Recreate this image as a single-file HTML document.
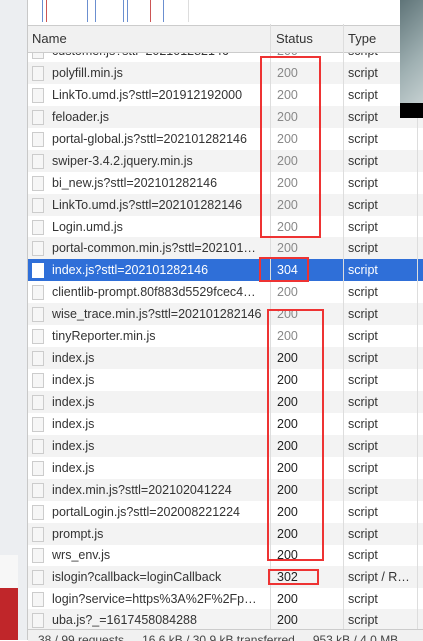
<!DOCTYPE html>
<html><head><style>
body{margin:0;width:423px;height:640px;overflow:hidden;background:#fff;font-family:"Liberation Sans",sans-serif;position:relative}
.a{position:absolute}
.row{position:absolute;left:28px;width:395px;height:22px;font-size:12.5px;line-height:22px;color:#333}
.row .n{position:absolute;left:24px;width:238px;white-space:nowrap;overflow:hidden}
.row .s{position:absolute;left:249px;color:#888}
.row .t{position:absolute;left:320px}
.row .i{position:absolute;left:4px;top:4px;width:10px;height:13px;border:1px solid #ccc;background:#f6f6f6}
.row.b .s{color:#222}
.alt{background:#f3f3f3}
.sel{background:#2f6fd8;color:#fff}
.sel .s,.sel .n,.sel .t{color:#fff}
.sel .i{background:#fff;border-color:#fff}
.box{position:absolute;border:2.5px solid #ee3333}
</style></head><body>
<div class="a" style="left:0;top:0;width:27px;height:640px;background:#eceef1"></div>
<div class="a" style="left:0;top:555px;width:18px;height:33px;background:#f7f7f7"></div>
<div class="a" style="left:0;top:588px;width:18px;height:52px;background:#c0262a"></div>
<div class="a" style="left:27px;top:0;width:1px;height:640px;background:#c8c8c8"></div>
<div class="a" style="left:28px;top:0;width:395px;height:24px;background:#fff"></div>
<div class="a" style="left:42px;top:0;width:1px;height:22px;background:#6b8fd0"></div>
<div class="a" style="left:46px;top:0;width:1px;height:22px;background:#c55"></div>
<div class="a" style="left:87px;top:0;width:1px;height:22px;background:#6b8fd0"></div>
<div class="a" style="left:95px;top:0;width:1px;height:22px;background:#6b8fd0"></div>
<div class="a" style="left:123px;top:0;width:1px;height:22px;background:#6b8fd0"></div>
<div class="a" style="left:127px;top:0;width:1px;height:22px;background:#6b8fd0"></div>
<div class="a" style="left:150px;top:0;width:1px;height:22px;background:#c55"></div>
<div class="a" style="left:163px;top:0;width:1px;height:22px;background:#6b8fd0"></div>
<div class="a" style="left:188px;top:0;width:1px;height:22px;background:#ddd"></div>

<div class="row" style="top:40px"><div class="i"></div><div class="n">customer.js?sttl=202101282146</div><div class="s">200</div><div class="t">script</div></div>
<div class="a" style="left:28px;top:25px;width:395px;height:26px;background:#f1f1f1;border-top:1px solid #ccc;border-bottom:1px solid #ccc"></div>
<div class="a" style="left:32px;top:31px;font-size:13px;color:#333">Name</div>
<div class="a" style="left:276px;top:31px;font-size:13px;color:#333">Status</div>
<div class="a" style="left:348px;top:31px;font-size:13px;color:#333">Type</div>

<div class="row alt" style="top:62px"><div class="i"></div><div class="n">polyfill.min.js</div><div class="s">200</div><div class="t">script</div></div>
<div class="row" style="top:84px"><div class="i"></div><div class="n">LinkTo.umd.js?sttl=201912192000</div><div class="s">200</div><div class="t">script</div></div>
<div class="row alt" style="top:106px"><div class="i"></div><div class="n">feloader.js</div><div class="s">200</div><div class="t">script</div></div>
<div class="row" style="top:128px"><div class="i"></div><div class="n">portal-global.js?sttl=202101282146</div><div class="s">200</div><div class="t">script</div></div>
<div class="row alt" style="top:150px"><div class="i"></div><div class="n">swiper-3.4.2.jquery.min.js</div><div class="s">200</div><div class="t">script</div></div>
<div class="row" style="top:172px"><div class="i"></div><div class="n">bi_new.js?sttl=202101282146</div><div class="s">200</div><div class="t">script</div></div>
<div class="row alt" style="top:194px"><div class="i"></div><div class="n">LinkTo.umd.js?sttl=202101282146</div><div class="s">200</div><div class="t">script</div></div>
<div class="row" style="top:216px"><div class="i"></div><div class="n">Login.umd.js</div><div class="s">200</div><div class="t">script</div></div>
<div class="row alt" style="top:237px"><div class="i"></div><div class="n">portal-common.min.js?sttl=202101…</div><div class="s">200</div><div class="t">script</div></div>
<div class="row sel" style="top:259px"><div class="i"></div><div class="n">index.js?sttl=202101282146</div><div class="s">304</div><div class="t">script</div></div>
<div class="row" style="top:281px"><div class="i"></div><div class="n">clientlib-prompt.80f883d5529fcec4…</div><div class="s">200</div><div class="t">script</div></div>
<div class="row alt" style="top:303px"><div class="i"></div><div class="n">wise_trace.min.js?sttl=202101282146</div><div class="s">200</div><div class="t">script</div></div>
<div class="row" style="top:325px"><div class="i"></div><div class="n">tinyReporter.min.js</div><div class="s">200</div><div class="t">script</div></div>
<div class="row alt b" style="top:347px"><div class="i"></div><div class="n">index.js</div><div class="s">200</div><div class="t">script</div></div>
<div class="row b" style="top:369px"><div class="i"></div><div class="n">index.js</div><div class="s">200</div><div class="t">script</div></div>
<div class="row alt b" style="top:391px"><div class="i"></div><div class="n">index.js</div><div class="s">200</div><div class="t">script</div></div>
<div class="row b" style="top:413px"><div class="i"></div><div class="n">index.js</div><div class="s">200</div><div class="t">script</div></div>
<div class="row alt b" style="top:435px"><div class="i"></div><div class="n">index.js</div><div class="s">200</div><div class="t">script</div></div>
<div class="row b" style="top:457px"><div class="i"></div><div class="n">index.js</div><div class="s">200</div><div class="t">script</div></div>
<div class="row alt b" style="top:479px"><div class="i"></div><div class="n">index.min.js?sttl=202102041224</div><div class="s">200</div><div class="t">script</div></div>
<div class="row b" style="top:501px"><div class="i"></div><div class="n">portalLogin.js?sttl=202008221224</div><div class="s">200</div><div class="t">script</div></div>
<div class="row alt b" style="top:523px"><div class="i"></div><div class="n">prompt.js</div><div class="s">200</div><div class="t">script</div></div>
<div class="row b" style="top:544px"><div class="i"></div><div class="n">wrs_env.js</div><div class="s">200</div><div class="t">script</div></div>
<div class="row alt b" style="top:566px"><div class="i"></div><div class="n">islogin?callback=loginCallback</div><div class="s">302</div><div class="t">script / R…</div></div>
<div class="row b" style="top:588px"><div class="i"></div><div class="n">login?service=https%3A%2F%2Fp…</div><div class="s">200</div><div class="t">script</div></div>
<div class="row alt b" style="top:609px"><div class="i"></div><div class="n">uba.js?_=1617458084288</div><div class="s">200</div><div class="t">script</div></div>
<div class="a" style="left:270px;top:24px;width:1px;height:606px;background:#ddd"></div>
<div class="a" style="left:343px;top:24px;width:1px;height:606px;background:#ddd"></div>
<div class="a" style="left:417px;top:24px;width:1px;height:606px;background:#ddd"></div>
<div class="a" style="left:28px;top:629px;width:395px;height:11px;background:#f1f1f1;border-top:1px solid #ccc;font-size:12px;color:#444;line-height:20px;white-space:nowrap;overflow:hidden"><span style="margin-left:10px">38 / 99 requests</span><span style="margin-left:18px">16.6 kB / 30.9 kB transferred</span><span style="margin-left:18px">953 kB / 4.0 MB</span></div>
<div class="a" style="left:400px;top:0;width:23px;height:103px;background:linear-gradient(135deg,#5f7478,#9fb0b2 60%,#c4cfd0)"></div>
<div class="a" style="left:400px;top:103px;width:23px;height:15px;background:#000"></div>
<div class="box" style="left:260px;top:56px;width:57px;height:178px"></div>
<div class="box" style="left:259px;top:257px;width:46px;height:21px"></div>
<div class="box" style="left:267px;top:309px;width:53px;height:248px"></div>
<div class="box" style="left:268px;top:569px;width:47px;height:12px"></div>
</body></html>
